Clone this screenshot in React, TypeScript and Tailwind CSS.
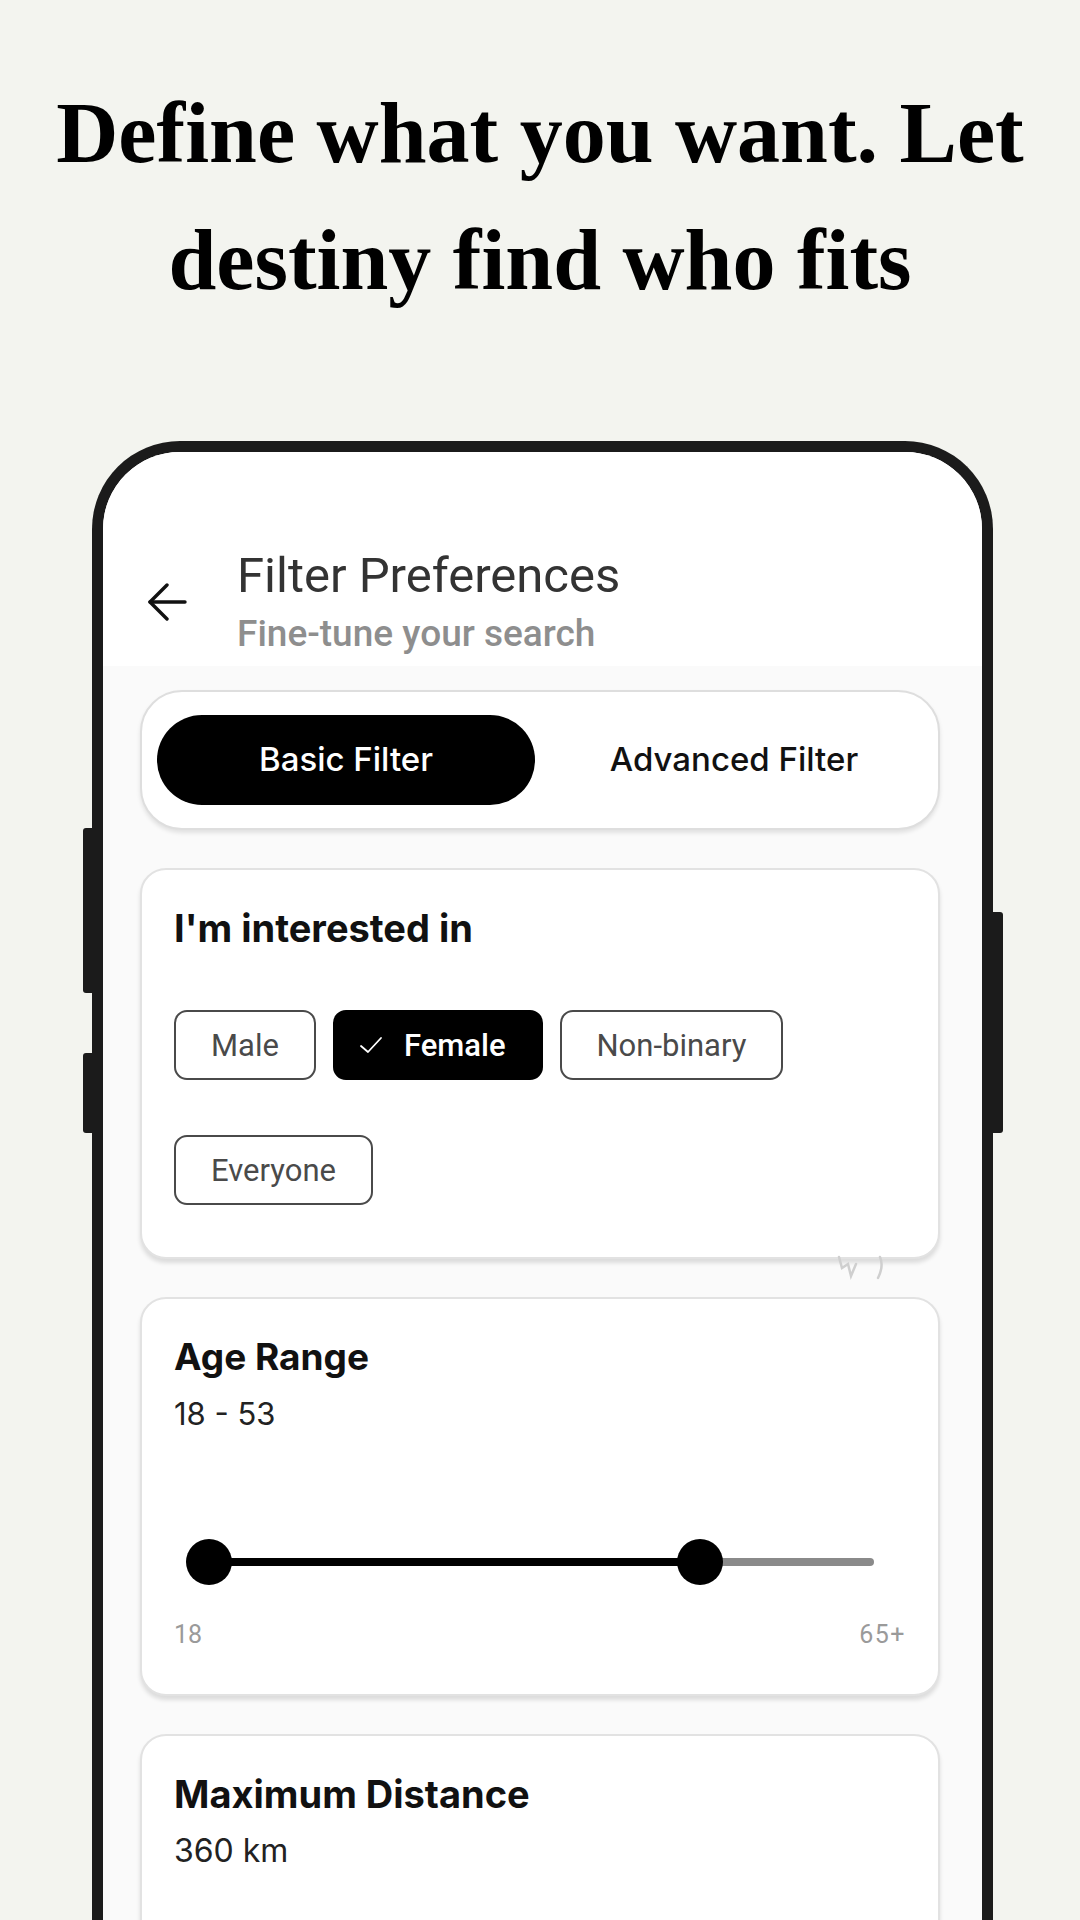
import React from "react";

function Chip({ label, active }: { label: string; active?: boolean }) {
  if (active) {
    return (
      <div className="h-[70px] flex items-center gap-[20px] pl-[23px] pr-[35px] rounded-[13px] bg-black border-2 border-black">
        <svg width="26" height="26" viewBox="0 0 26 26" fill="none" stroke="#ffffff" strokeWidth="1.8" strokeLinecap="round" strokeLinejoin="round">
          <path d="M3 14 L10 20 L23 6" />
        </svg>
        <span className="text-white text-[31px] font-medium font-['Roboto',sans-serif] leading-none">{label}</span>
      </div>
    );
  }
  return (
    <div className="h-[70px] flex items-center px-[35px] rounded-[13px] bg-white border-2 border-[#4a4a4a]">
      <span className="text-[#4a4a4a] text-[31px] font-['Roboto',sans-serif] leading-none">{label}</span>
    </div>
  );
}

export default function App() {
  return (
    <div className="w-[1080px] h-[1920px] overflow-hidden bg-[#f3f4ef] flex flex-col">
      <h1 className="mt-[70px] text-center font-bold text-[86px] leading-[127px] text-black font-['Liberation_Serif',serif]">
        Define what you want. Let
        <br />
        destiny find who fits
      </h1>

      <div className="relative ml-[92px] mt-[117px] w-[901px] h-[1600px]">
        {/* side buttons */}
        <div className="absolute left-[-9px] top-[387px] w-[11px] h-[165px] bg-[#1b1b1b] rounded-l-[3px]" />
        <div className="absolute left-[-9px] top-[612px] w-[11px] h-[80px] bg-[#1b1b1b] rounded-l-[3px]" />
        <div className="absolute right-[-10px] top-[471px] w-[12px] h-[221px] bg-[#1b1b1b] rounded-r-[3px]" />

        <div className="w-full h-full border-[11px] border-b-0 border-[#1b1b1b] rounded-t-[88px] bg-white overflow-hidden flex flex-col">
          {/* header */}
          <div className="bg-white pt-[96px] pb-[10px] pl-[44px] flex items-center gap-[50px]">
            <svg width="40" height="38" viewBox="0 0 40 38" fill="none" stroke="#111111" strokeWidth="3.4" strokeLinecap="round" strokeLinejoin="round">
              <path d="M38 19 H3" />
              <path d="M20 2 L3 19 L20 36" />
            </svg>
            <div className="flex flex-col">
              <div className="text-[49px] leading-[56px] text-[#333333] font-['Roboto',sans-serif]">Filter Preferences</div>
              <div className="mt-[8px] text-[37px] leading-[44px] text-[#8e8e8e] font-medium font-['Roboto',sans-serif]">Fine-tune your search</div>
            </div>
          </div>

          {/* scroll area */}
          <div className="flex-1 bg-[#fafafa] pt-[24px] pl-[37px] pr-[42px] flex flex-col gap-[38px]">
            {/* tabs */}
            <div className="h-[140px] rounded-[42px] border-2 border-[#dedede] bg-white px-[15px] py-[23px] flex gap-[10px] shadow-[0_3px_4px_rgba(0,0,0,0.10)]">
              <div className="flex-1 rounded-full bg-black flex items-center justify-center">
                <span className="text-white text-[33px] font-medium font-['Inter',sans-serif]">Basic Filter</span>
              </div>
              <div className="flex-1 flex items-center justify-center">
                <span className="text-[#111111] text-[33px] font-medium font-['Inter',sans-serif]">Advanced Filter</span>
              </div>
            </div>

            {/* interested in */}
            <div className="relative rounded-[26px] border-2 border-[#e2e2e2] bg-white pt-[36px] pb-[52px] px-[32px] shadow-[0_4px_4px_rgba(0,0,0,0.12)]">
              <div className="text-[38px] leading-[44px] font-bold text-[#111111] font-['Inter',sans-serif]">I'm interested in</div>
              <div className="mt-[60px] flex flex-wrap gap-x-[17px] gap-y-[55px]">
                <Chip label="Male" />
                <Chip label="Female" active />
                <Chip label="Non-binary" />
                <Chip label="Everyone" />
              </div>
              <svg className="absolute left-[694px] top-[384px]" width="54" height="30" viewBox="0 0 54 30" fill="none" stroke="#cfcfcf" strokeWidth="2.5" strokeLinecap="round">
                <path d="M3 3 L6 14 L12 10 L15 22 L20 10" />
                <path d="M44 3 Q48 12 42 24" />
              </svg>
            </div>

            {/* age range */}
            <div className="rounded-[26px] border-2 border-[#e2e2e2] bg-white pt-[36px] pb-[44px] px-[32px] shadow-[0_4px_4px_rgba(0,0,0,0.12)]">
              <div className="text-[37px] leading-[44px] font-bold text-[#111111] font-['Inter',sans-serif]">Age Range</div>
              <div className="mt-[17px] text-[31px] leading-[36px] text-[#222222] font-['Inter',sans-serif]">18 - 53</div>
              <div className="relative mt-[107px] h-[46px]">
                <div className="absolute left-[35px] right-[32px] top-[19px] h-[8px] rounded-full bg-[#8a8a8a]" />
                <div className="absolute left-[35px] w-[491px] top-[19px] h-[8px] bg-black" />
                <div className="absolute left-[12px] top-0 w-[46px] h-[46px] rounded-full bg-black" />
                <div className="absolute left-[503px] top-0 w-[46px] h-[46px] rounded-full bg-black" />
              </div>
              <div className="mt-[35px] flex justify-between text-[25px] leading-[30px] text-[#9a9a9a] font-['Roboto',sans-serif]">
                <span>18</span>
                <span className="tracking-[1.5px]">65+</span>
              </div>
            </div>

            {/* max distance */}
            <div className="rounded-[26px] border-2 border-[#e2e2e2] bg-white pt-[36px] pb-[44px] px-[32px] shadow-[0_4px_4px_rgba(0,0,0,0.12)] h-[400px]">
              <div className="text-[38px] leading-[44px] font-bold text-[#111111] font-['Inter',sans-serif]">Maximum Distance</div>
              <div className="mt-[17px] text-[32px] leading-[36px] text-[#222222] font-['Inter',sans-serif]">360 km</div>
            </div>
          </div>
        </div>
      </div>
    </div>
  );
}
